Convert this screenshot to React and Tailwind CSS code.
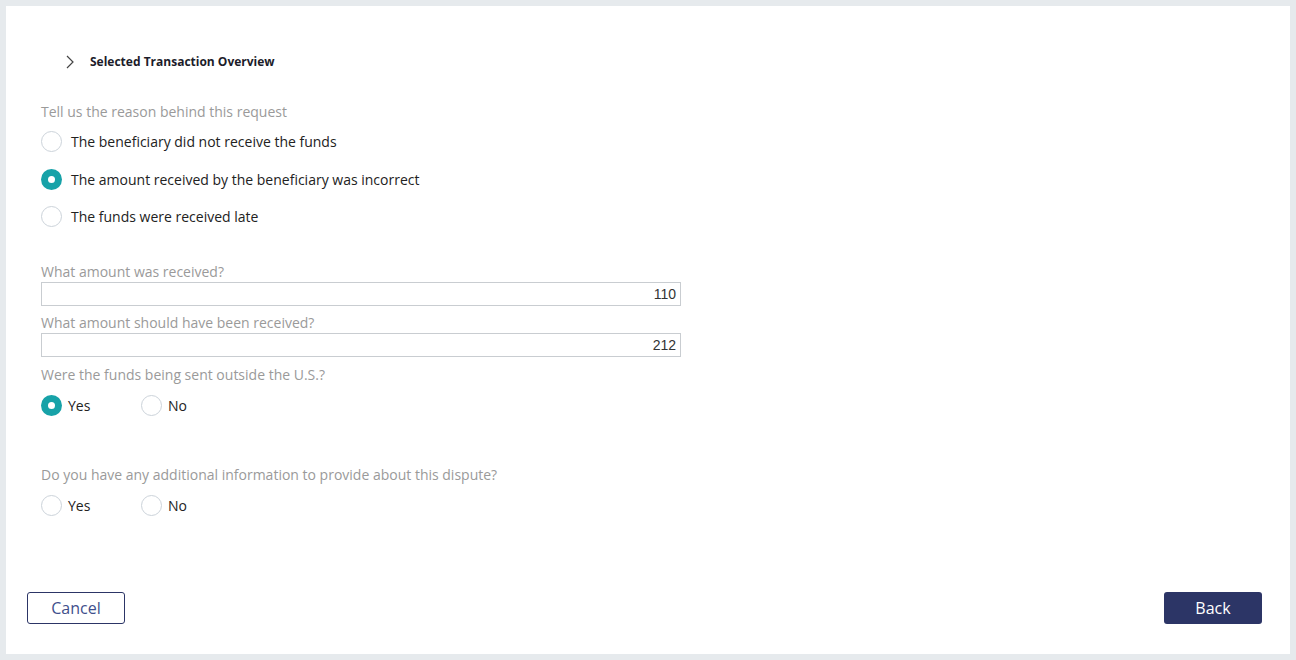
const font = { fontFamily: '"Open Sans", "Noto Sans", sans-serif' };

const Radio = ({ checked }) =>
  checked ? (
    <span className="w-[21px] h-[21px] rounded-full bg-[#17a2a8] flex items-center justify-center flex-shrink-0">
      <span className="w-[7px] h-[7px] rounded-full bg-white" />
    </span>
  ) : (
    <span className="w-[21px] h-[21px] rounded-full border border-[#ccd3da] bg-white flex-shrink-0" />
  );

const Option = ({ checked, label, gap = "gap-[9px]" }) => (
  <label className={`flex items-center ${gap} h-[21px] text-[14px] text-[#222] cursor-pointer`}>
    <Radio checked={checked} />
    <span>{label}</span>
  </label>
);

const YesNo = ({ value }) => (
  <div className="flex items-center">
    <div className="w-[100px]">
      <Option checked={value === "yes"} label="Yes" gap="gap-[6px]" />
    </div>
    <Option checked={value === "no"} label="No" gap="gap-[6px]" />
  </div>
);

const Label = ({ children, className = "" }) => (
  <div className={`text-[14px] leading-[20px] text-[#9a9a9a] ${className}`}>{children}</div>
);

const AmountInput = ({ value }) => (
  <div
    className="w-[640px] h-[24px] border border-[#c9cdd1] flex items-center justify-end px-[4px] text-[14px] text-[#333]"
    style={{ fontFamily: '"Liberation Sans", Arial, sans-serif' }}
  >
    {value}
  </div>
);

export default function App() {
  return (
    <div className="bg-[#e6eaed] p-[6px] h-[660px]" style={font}>
      <div className="bg-white h-full flex flex-col">
        <div className="flex items-center h-[20px] mt-[46px] pl-[59px]">
          <svg width="10" height="14" viewBox="0 0 10 14" className="text-[#444]">
            <polyline points="2,1 8,7 2,13" fill="none" stroke="currentColor" strokeWidth="1.2" />
          </svg>
          <span className="ml-[15px] text-[12px] font-bold text-[#1c1c2a]">Selected Transaction Overview</span>
        </div>

        <div className="px-[35px] flex flex-col">
          <Label className="mt-[30px]">Tell us the reason behind this request</Label>
          <div className="mt-[9px]">
            <Option label="The beneficiary did not receive the funds" />
          </div>
          <div className="mt-[17px]">
            <Option checked label="The amount received by the beneficiary was incorrect" />
          </div>
          <div className="mt-[16px]">
            <Option label="The funds were received late" />
          </div>

          <Label className="mt-[35px]">What amount was received?</Label>
          <AmountInput value="110" />
          <Label className="mt-[7px]">What amount should have been received?</Label>
          <AmountInput value="212" />
          <Label className="mt-[8px]">Were the funds being sent outside the U.S.?</Label>
          <div className="mt-[10px]">
            <YesNo value="yes" />
          </div>

          <Label className="mt-[49px]">Do you have any additional information to provide about this dispute?</Label>
          <div className="mt-[10px]">
            <YesNo />
          </div>
        </div>

        <div className="mt-auto mb-[30px] flex justify-between pl-[21px] pr-[28px]">
          <button className="w-[98px] h-[32px] rounded-[3px] border border-[#2c3566] text-[16px] text-[#3f4f8c] bg-white">
            Cancel
          </button>
          <button className="w-[98px] h-[32px] rounded-[3px] bg-[#2c3566] text-[16px] text-white">
            Back
          </button>
        </div>
      </div>
    </div>
  );
}
